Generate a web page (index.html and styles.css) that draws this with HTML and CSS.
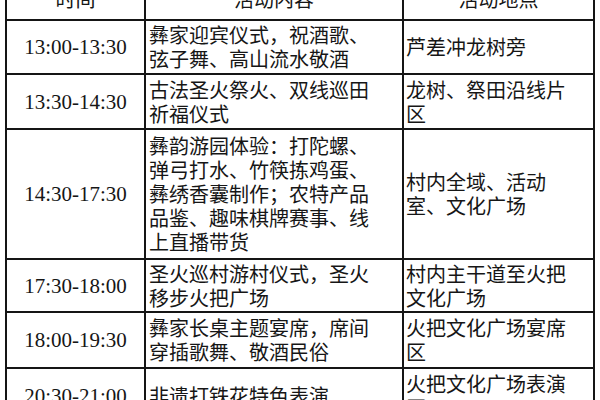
FILE: index.html
```html
<!DOCTYPE html>
<html lang="zh">
<head>
<meta charset="utf-8">
<link rel="stylesheet" href="styles.css">
</head>
<body>
<div class="schedule">
  <div class="cell head">时间</div>
  <div class="cell head">活动内容</div>
  <div class="cell head">活动地点</div>

  <div class="cell time">13:00-13:30</div>
  <div class="cell content">彝家迎宾仪式，祝酒歌、<br>弦子舞、高山流水敬酒</div>
  <div class="cell place">芦差冲龙树旁</div>

  <div class="cell time">13:30-14:30</div>
  <div class="cell content">古法圣火祭火、双线巡田<br>祈福仪式</div>
  <div class="cell place">龙树、祭田沿线片<br>区</div>

  <div class="cell time">14:30-17:30</div>
  <div class="cell content">彝韵游园体验：打陀螺、<br>弹弓打水、竹筷拣鸡蛋、<br>彝绣香囊制作；农特产品<br>品鉴、趣味棋牌赛事、线<br>上直播带货</div>
  <div class="cell place">村内全域、活动<br>室、文化广场</div>

  <div class="cell time">17:30-18:00</div>
  <div class="cell content">圣火巡村游村仪式，圣火<br>移步火把广场</div>
  <div class="cell place">村内主干道至火把<br>文化广场</div>

  <div class="cell time">18:00-19:30</div>
  <div class="cell content">彝家长桌主题宴席，席间<br>穿插歌舞、敬酒民俗</div>
  <div class="cell place">火把文化广场宴席<br>区</div>

  <div class="cell time">20:30-21:00</div>
  <div class="cell content">非遗打铁花特色表演</div>
  <div class="cell place">火把文化广场表演<br>区</div>
</div>
</body>
</html>
```

FILE: styles.css
```css
html, body {
  margin: 0;
  padding: 0;
  background: #ffffff;
}

body {
  width: 600px;
  height: 400px;
  overflow: hidden;
}

.schedule {
  display: grid;
  grid-template-columns: 137px 256px 189px;
  grid-template-rows: 41px 52px 53px 128px 51px 54px 54px;
  gap: 2px;
  padding: 2px;
  width: 590px;
  box-sizing: border-box;
  margin: -24px 0 0 5px;
  background: #151515;
}

.cell {
  background: #ffffff;
  color: #161616;
  display: flex;
  align-items: center;
  font-family: "Noto Sans CJK SC", "Noto Sans", sans-serif;
  font-size: 20px;
  line-height: 24px;
  white-space: nowrap;
}

.head {
  justify-content: center;
}

.time {
  justify-content: center;
  font-family: "Liberation Serif", "Noto Sans CJK SC", serif;
  font-size: 21px;
}

.content {
  padding-left: 3px;
}

.place {
  padding-left: 2px;
}
```
